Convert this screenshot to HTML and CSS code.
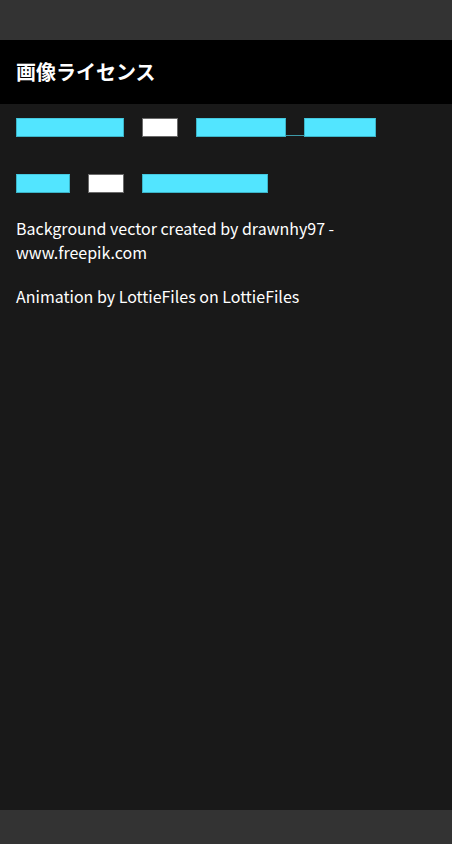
FILE: index.html
```html
<!DOCTYPE html>
<html lang="ja">
<head>
<meta charset="utf-8">
<link rel="stylesheet" href="styles.css">
</head>
<body>
<div class="page">
  <div class="topbar"></div>
  <header class="header"><h1 class="title">画像ライセンス</h1></header>
  <main class="content">
    <div class="bars">
      <span class="bar cyan w108"></span>
      <span class="bar white w36"></span>
      <span class="linkpair"><span class="bar cyan w90"></span><span class="gapline"></span><span class="bar cyan w72"></span></span>
    </div>
    <div class="bars">
      <span class="bar cyan w54"></span>
      <span class="bar white w36"></span>
      <span class="bar cyan w126"></span>
    </div>
    <p class="credit">Background vector created by drawnhy97 - www.freepik.com</p>
    <p class="credit">Animation by LottieFiles on LottieFiles</p>
  </main>
  <div class="bottombar"></div>
</div>
</body>
</html>
```
FILE: styles.css
```css
html, body { margin: 0; padding: 0; }
body { background: #191919; font-family: "Noto Sans CJK JP", "Noto Sans", sans-serif; color: #fff; }
.page { display: flex; flex-direction: column; height: 844px; width: 452px; }
.topbar { height: 40px; background: #333333; flex: none; }
.header { height: 64px; background: #000; display: flex; align-items: center; padding: 0 16px; flex: none; }
.title { margin: 0; font-family: "Noto Sans CJK JP", sans-serif; font-size: 20px; font-weight: 700; line-height: 1; color: #fff; }
.content { flex: 1; padding: 14px 16px 0; }
.bars { display: flex; gap: 18px; height: 19px; margin-bottom: 37px; }
.bar { display: block; height: 19px; box-sizing: border-box; }
.cyan { background: #52e5ff; border: 1px solid #3cb4c8; border-top-color: #45c9e0; }
.white { background: #ffffff; border: 1px solid #6a6a6a; }
.linkpair { display: flex; align-items: flex-end; }
.linkpair .bar { align-self: flex-start; }
.gapline { width: 18px; height: 0; border-bottom: 1px solid #3e9aa8; margin-bottom: 1px; }
.w36 { width: 36px; } .w54 { width: 54px; } .w72 { width: 72px; } .w90 { width: 90px; } .w108 { width: 108px; } .w126 { width: 126px; }
.credit { margin: -14px 0 20px; font-size: 16px; font-weight: 400; line-height: 24px; width: 340px; }
.credit + .credit { margin-top: 0; }
.bottombar { height: 34px; background: #333333; flex: none; }
```
